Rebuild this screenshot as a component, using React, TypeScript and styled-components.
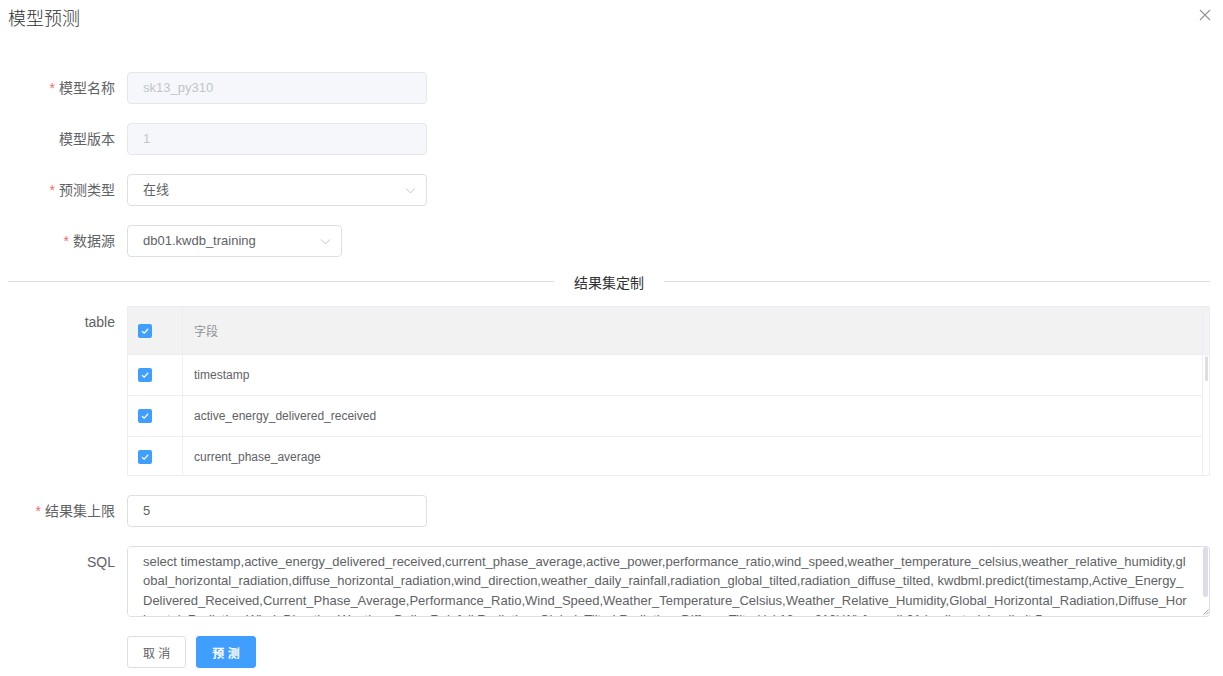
import React from 'react'
import styled, { createGlobalStyle } from 'styled-components'

const GlobalStyle = createGlobalStyle`
  html, body {
    margin: 0;
    padding: 0;
    background: #ffffff;
  }
  body {
    font-family: "Liberation Sans", Arial, "Noto Sans CJK SC", sans-serif;
    color: #606266;
  }
  * {
    box-sizing: border-box;
  }
`

const fields = [
  'timestamp',
  'active_energy_delivered_received',
  'current_phase_average',
  'active_power',
  'performance_ratio',
  'wind_speed',
  'weather_temperature_celsius',
  'weather_relative_humidity',
  'global_horizontal_radiation',
  'diffuse_horizontal_radiation',
  'wind_direction',
  'weather_daily_rainfall',
  'radiation_global_tilted',
  'radiation_diffuse_tilted',
]

const sql =
  'select timestamp,active_energy_delivered_received,current_phase_average,active_power,performance_ratio,wind_speed,weather_temperature_celsius,weather_relative_humidity,global_horizontal_radiation,diffuse_horizontal_radiation,wind_direction,weather_daily_rainfall,radiation_global_tilted,radiation_diffuse_tilted, kwdbml.predict(timestamp,Active_Energy_Delivered_Received,Current_Phase_Average,Performance_Ratio,Wind_Speed,Weather_Temperature_Celsius,Weather_Relative_Humidity,Global_Horizontal_Radiation,Diffuse_Horizontal_Radiation,Wind_Direction,Weather_Daily_Rainfall,Radiation_Global_Tilted,Radiation_Diffuse_Tilted,\'sk13_py310\',\'1\') from db01.kwdb_training limit 5'

const Chevron = () => (
  <svg width='13' height='13' viewBox='0 0 16 16' fill='none'>
    <path d='M2.5 5.5 L8 11 L13.5 5.5' stroke='#c0c4cc' strokeWidth='1.2' />
  </svg>
)

const Check = () => (
  <svg width='10' height='10' viewBox='0 0 10 10' fill='none'>
    <path d='M2 5.2 L4.2 7.2 L8.2 2.8' stroke='#ffffff' strokeWidth='1.3' />
  </svg>
)

const App: React.FC = () => {
  return (
    <Dialog>
      <GlobalStyle />
      <Header>
        <Title>模型预测</Title>
        <Close aria-label='close'>
          <svg width='12' height='12' viewBox='0 0 12 12'>
            <path d='M1 1 L11 11 M11 1 L1 11' stroke='#909399' strokeWidth='1.1' />
          </svg>
        </Close>
      </Header>
      <Body>
        <FormItem>
          <Label required>模型名称</Label>
          <Input disabled width={300}>sk13_py310</Input>
        </FormItem>
        <FormItem>
          <Label>模型版本</Label>
          <Input disabled width={300}>1</Input>
        </FormItem>
        <FormItem>
          <Label required>预测类型</Label>
          <Input width={300}>
            在线
            <Arrow><Chevron /></Arrow>
          </Input>
        </FormItem>
        <FormItem>
          <Label required>数据源</Label>
          <Input width={215}>
            db01.kwdb_training
            <Arrow><Chevron /></Arrow>
          </Input>
        </FormItem>

        <Divider>
          <DividerText>结果集定制</DividerText>
        </Divider>

        <FormItem>
          <Label>table</Label>
          <Table>
            <HeadRow>
              <CheckCell><CheckBox><Check /></CheckBox></CheckCell>
              <HeadCell>字段</HeadCell>
              <Gutter />
            </HeadRow>
            <BodyWrap>
              <TableBody>
                {fields.map((f) => (
                  <Row key={f}>
                    <CheckCell><CheckBox><Check /></CheckBox></CheckCell>
                    <Cell>{f}</Cell>
                  </Row>
                ))}
              </TableBody>
              <TableTrack>
                <Thumb height={25} />
              </TableTrack>
            </BodyWrap>
          </Table>
        </FormItem>

        <FormItem>
          <Label required>结果集上限</Label>
          <Input width={300}>5</Input>
        </FormItem>
        <FormItem>
          <Label>SQL</Label>
          <TextAreaBox>
            <TextArea readOnly value={sql} />
            <TextTrack>
              <Thumb height={50} />
              <Resizer>
                <svg width='6' height='6' viewBox='0 0 6 6'>
                  <path d='M0.5 5.5 L5.5 0.5 M3 5.5 L5.5 3' stroke='#909399' strokeWidth='0.8' />
                </svg>
              </Resizer>
            </TextTrack>
          </TextAreaBox>
        </FormItem>
        <Actions>
          <Button>取 消</Button>
          <Button primary>预 测</Button>
        </Actions>
      </Body>
    </Dialog>
  )
}

export default App

const Dialog = styled.div`
  width: 1223px;
  height: 676px;
  background: #ffffff;
  overflow: hidden;
`
const Header = styled.div`
  height: 38px;
  padding: 8px 13px 8px 8px;
  display: flex;
  align-items: flex-start;
  justify-content: space-between;
`
const Title = styled.span`
  font-size: 18px;
  line-height: 22px;
  font-weight: 300;
  color: #303133;
`
const Close = styled.span`
  display: flex;
  margin-top: 1px;
  margin-right: -1px;
`
const Body = styled.div`
  padding: 34px 13px 0 8px;
  display: flex;
  flex-direction: column;
`
const FormItem = styled.div`
  display: flex;
  align-items: flex-start;
  margin-bottom: 19px;
`
const Label = styled.label<{ required?: boolean }>`
  width: 119px;
  flex-shrink: 0;
  padding-right: 12px;
  text-align: right;
  font-size: 14px;
  line-height: 32px;
  color: #606266;

  &::before {
    content: ${(p) => (p.required ? "'*'" : "''")};
    color: #f56c6c;
    margin-right: 4px;
  }
`
const Input = styled.div<{ width: number; disabled?: boolean }>`
  width: ${(p) => p.width}px;
  height: 32px;
  padding: 0 15px;
  border: 1px solid ${(p) => (p.disabled ? '#e4e7ed' : '#dcdfe6')};
  border-radius: 4px;
  background: ${(p) => (p.disabled ? '#f5f7fa' : '#ffffff')};
  color: ${(p) => (p.disabled ? '#c0c4cc' : '#606266')};
  font-size: 13px;
  line-height: 30px;
  display: flex;
  align-items: center;
  justify-content: space-between;
`
const Arrow = styled.span`
  display: flex;
  margin-right: -6px;
`
const Divider = styled.div`
  height: 1px;
  margin: 5px 0 24px;
  background: #dcdfe6;
  display: flex;
  align-items: center;
  justify-content: center;
`
const DividerText = styled.span`
  padding: 0 20px;
  background: #ffffff;
  font-size: 14px;
  color: #303133;
`
const Table = styled.div`
  flex: 1;
  height: 170px;
  border: 1px solid #ebeef5;
  display: flex;
  flex-direction: column;
  overflow: hidden;
`
const HeadRow = styled.div`
  height: 48px;
  flex-shrink: 0;
  display: flex;
  background: #f2f2f2;
  border-bottom: 1px solid #ebeef5;
`
const CheckCell = styled.div`
  width: 55px;
  flex-shrink: 0;
  padding-left: 10px;
  border-right: 1px solid #ebeef5;
  display: flex;
  align-items: center;
  justify-content: flex-start;
`
const CheckBox = styled.span`
  width: 14px;
  height: 14px;
  border-radius: 2px;
  background: #409eff;
  display: flex;
  align-items: center;
  justify-content: center;
`
const HeadCell = styled.div`
  flex: 1;
  padding: 0 11px;
  display: flex;
  align-items: center;
  font-size: 12px;
  color: #909399;
`
const Gutter = styled.div`
  width: 7px;
  border-left: 1px solid #ebeef5;
`
const BodyWrap = styled.div`
  flex: 1;
  min-height: 0;
  display: flex;
`
const TableBody = styled.div`
  flex: 1;
  overflow: hidden;
`
const TableTrack = styled.div`
  width: 7px;
  flex-shrink: 0;
  padding: 1px 1px 0 2px;
  border-left: 1px solid #ebeef5;
  display: flex;
  flex-direction: column;
`
const Thumb = styled.div<{ height: number }>`
  height: ${(p) => p.height}px;
  flex-shrink: 0;
  border-radius: 3px;
  background: #dcdde6;
`
const Row = styled.div`
  height: 41px;
  display: flex;
  border-bottom: 1px solid #ebeef5;
`
const Cell = styled.div`
  flex: 1;
  padding: 0 11px;
  display: flex;
  align-items: center;
  font-size: 12px;
  color: #606266;
`
const TextAreaBox = styled.div`
  flex: 1;
  height: 71px;
  border: 1px solid #dcdfe6;
  border-radius: 4px;
  display: flex;
  overflow: hidden;
`
const TextArea = styled.textarea`
  flex: 1;
  height: 100%;
  padding: 5px 13px 5px 15px;
  border: none;
  font-family: "Liberation Sans", Arial, "Noto Sans CJK SC", sans-serif;
  font-size: 13px;
  line-height: 19.3px;
  color: #606266;
  word-break: break-all;
  resize: none;
  outline: none;
  overflow: hidden;
`
const TextTrack = styled.div`
  width: 8px;
  flex-shrink: 0;
  padding: 0 1px 1px 2px;
  display: flex;
  flex-direction: column;
  justify-content: space-between;
  align-items: stretch;
`
const Resizer = styled.span`
  display: flex;
  justify-content: flex-end;
  margin-right: -1px;
`
const Actions = styled.div`
  display: flex;
  gap: 10px;
  padding-left: 119px;
`
const Button = styled.button<{ primary?: boolean }>`
  height: 32px;
  padding: 0 15px;
  border-radius: 3px;
  border: 1px solid ${(p) => (p.primary ? '#409eff' : '#dcdfe6')};
  background: ${(p) => (p.primary ? '#409eff' : '#ffffff')};
  color: ${(p) => (p.primary ? '#ffffff' : '#606266')};
  font-family: "Liberation Sans", Arial, "Noto Sans CJK SC", sans-serif;
  font-size: 12px;
  font-weight: ${(p) => (p.primary ? 600 : 400)};
  cursor: pointer;
`
